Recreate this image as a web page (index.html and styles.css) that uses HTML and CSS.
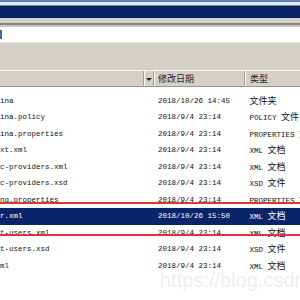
FILE: index.html
```html
<html>
<head>
<title>conf</title>
<link rel="stylesheet" href="styles.css">
</head>
<body>
<div class="window">
    <div class="titlebar"></div>
    <div class="toolbar"></div>
    <div class="address"><span class="addr-icon"></span></div>
    <div class="commandbar"></div>

    <div class="header">
        <div class="hcell"></div>
        <div class="hcell arrow-cell"><span class="arrow"></span></div>
        <div class="hcell date-head"><span class="cjk">修改日期</span></div>
        <div class="hcell type-head"><span class="cjk">类型</span></div>
    </div>

    <ul class="files">
        <li class="row"><span>catalina</span><span>2018/10/26 14:45</span><span><span class="cjk">文件夹</span></span></li>
        <li class="row"><span>catalina.policy</span><span>2018/9/4 23:14</span><span>POLICY <span class="cjk">文件</span></span></li>
        <li class="row"><span>catalina.properties</span><span>2018/9/4 23:14</span><span>PROPERTIES <span class="cjk">文件</span></span></li>
        <li class="row"><span>context.xml</span><span>2018/9/4 23:14</span><span>XML <span class="cjk">文档</span></span></li>
        <li class="row"><span>jaspic-providers.xml</span><span>2018/9/4 23:14</span><span>XML <span class="cjk">文档</span></span></li>
        <li class="row"><span>jaspic-providers.xsd</span><span>2018/9/4 23:14</span><span>XSD <span class="cjk">文件</span></span></li>
        <li class="row"><span>logging.properties</span><span>2018/9/4 23:14</span><span>PROPERTIES <span class="cjk">文件</span></span></li>
        <li class="row selected"><span>server.xml</span><span>2018/10/26 15:50</span><span>XML <span class="cjk">文档</span></span></li>
        <li class="row"><span>tomcat-users.xml</span><span>2018/9/4 23:14</span><span>XML <span class="cjk">文档</span></span></li>
        <li class="row"><span>tomcat-users.xsd</span><span>2018/9/4 23:14</span><span>XSD <span class="cjk">文件</span></span></li>
        <li class="row"><span>web.xml</span><span>2018/9/4 23:14</span><span>XML <span class="cjk">文档</span></span></li>
    </ul>

    <div class="mark"></div>
    <div class="watermark">https://blog.csdn.net</div>
</div>
</body>
</html>
```

FILE: styles.css
```css
body {
    margin: 0;
    padding: 0;
    width: 300px;
    height: 300px;
    overflow: hidden;
    background: white;
}

.window {
    position: relative;
    width: 300px;
    height: 300px;
    overflow: hidden;
    font-family: "Liberation Mono", monospace;
    font-size: 7.5px;
    color: #111;
}

.cjk {
    font-family: "Noto Sans CJK SC", sans-serif;
    font-size: 9px;
}

.titlebar {
    height: 18px;
    background: linear-gradient(to bottom,
        #5d82ba 0, #5d82ba 2px,
        #e6ebf2 2px, #e6ebf2 5px,
        #6f88b4 5px, #6f88b4 6px,
        #0a246a 6px, #0a246a 18px);
}

.toolbar {
    height: 5px;
    background: #d4d0c8;
    border-bottom: 2px solid #858585;
}

.address {
    height: 15px;
    background: white;
    border-top: 2px solid #c9c7c2;
    border-bottom: 1px solid #e6e5e2;
    display: flex;
    align-items: center;
}

.addr-icon {
    width: 2px;
    height: 9px;
    background: #3d64a6;
}

.commandbar {
    height: 27px;
    background: #d4d0c8;
}

.header {
    display: grid;
    grid-template-columns: 143px 10px 91px 1fr;
    height: 15px;
    background: #d4d0c8;
    border-top: 1px solid #f4f3f0;
    border-bottom: 1px solid #9a9893;
}

.hcell {
    display: flex;
    align-items: center;
    color: #222;
}

.arrow-cell,
.date-head,
.type-head {
    border-left: 1px solid #a19e97;
    box-shadow: inset 1px 0 0 #fbfaf8;
}

.arrow-cell {
    justify-content: center;
}

.arrow {
    width: 0;
    height: 0;
    border-left: 3px solid transparent;
    border-right: 3px solid transparent;
    border-top: 3px solid #222;
    margin-top: 1px;
}

.date-head {
    padding-left: 4px;
}

.type-head {
    padding-left: 5px;
}

.files {
    list-style: none;
    margin: 0;
    padding: 5.75px 0 0 0;
}

.row {
    display: grid;
    grid-template-columns: 180.5px 91.5px 1fr;
    height: 16.5px;
    line-height: 16.5px;
    margin-left: -22.5px;
    white-space: nowrap;
}

.row.selected {
    background: #0a246a;
    color: white;
}

.mark {
    position: absolute;
    top: 201.5px;
    left: -6px;
    right: -6px;
    height: 30px;
    border: 2px solid #e23239;
}

.watermark {
    position: absolute;
    left: 160px;
    top: 269px;
    font-family: "Liberation Sans", Arial, sans-serif;
    font-size: 20px;
    color: #eeeeee;
    white-space: nowrap;
}
```
